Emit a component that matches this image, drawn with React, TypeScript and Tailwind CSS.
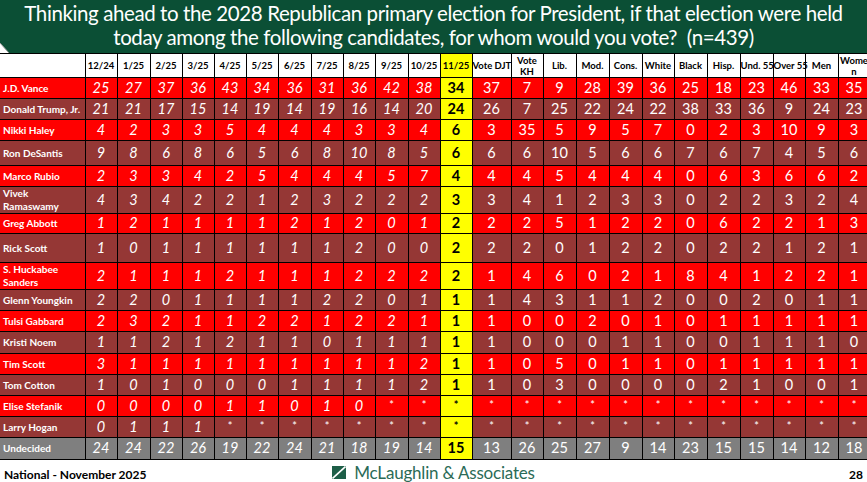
const dateCols = ["12/24", "1/25", "2/25", "3/25", "4/25", "5/25", "6/25", "7/25", "8/25", "9/25", "10/25"];
const dateW = ["w-[32px]", "w-[33px]", "w-[32px]", "w-[32px]", "w-[32px]", "w-[32px]", "w-[33px]", "w-[32px]", "w-[32px]", "w-[33px]", "w-[32px]"];
const demoCols = [["Vote DJT"], ["Vote", "KH"], ["Lib."], ["Mod."], ["Cons."], ["White"], ["Black"], ["Hisp."], ["Und. 55"], ["Over 55"], ["Men"], ["Wome", "n"]];
const demoW = ["w-[39px]", "w-[32px]", "w-[33px]", "w-[33px]", "w-[33px]", "w-[32px]", "w-[33px]", "w-[33px]", "w-[33px]", "w-[32px]", "w-[33px]", "w-[32px]"];

type Row = {
  name: string[];
  dates: string;
  cur: string;
  demo: string;
  bg: string;
  h: string;
};

const S = "* * * * * * * * * * * *";

const rows: Row[] = [
  { name: ["J.D. Vance"], dates: "25 27 37 36 43 34 36 31 36 42 38", cur: "34", demo: "37 7 9 28 39 36 25 18 23 46 33 35", bg: "bg-[#ff0000]", h: "h-[21px]" },
  { name: ["Donald Trump, Jr."], dates: "21 21 17 15 14 19 14 19 16 14 20", cur: "24", demo: "26 7 25 22 24 22 38 33 36 9 24 23", bg: "bg-[#953735]", h: "h-[21px]" },
  { name: ["Nikki Haley"], dates: "4 2 3 3 5 4 4 4 3 3 4", cur: "6", demo: "3 35 5 9 5 7 0 2 3 10 9 3", bg: "bg-[#ff0000]", h: "h-[21px]" },
  { name: ["Ron DeSantis"], dates: "9 8 6 8 6 5 6 8 10 8 5", cur: "6", demo: "6 6 10 5 6 6 7 6 7 4 5 6", bg: "bg-[#953735]", h: "h-[25px]" },
  { name: ["Marco Rubio"], dates: "2 3 3 4 2 5 4 4 4 5 7", cur: "4", demo: "4 4 5 4 4 4 0 6 3 6 6 2", bg: "bg-[#ff0000]", h: "h-[21px]" },
  { name: ["Vivek", "Ramaswamy"], dates: "4 3 4 2 2 1 2 3 2 2 2", cur: "3", demo: "3 4 1 2 3 3 0 2 2 3 2 4", bg: "bg-[#953735]", h: "h-[27px]" },
  { name: ["Greg Abbott"], dates: "1 2 1 1 1 1 2 1 2 0 1", cur: "2", demo: "2 2 5 1 2 2 0 6 2 2 1 3", bg: "bg-[#ff0000]", h: "h-[20px]" },
  { name: ["Rick Scott"], dates: "1 0 1 1 1 1 1 1 2 0 0", cur: "2", demo: "2 2 0 1 2 2 0 2 2 1 2 1", bg: "bg-[#953735]", h: "h-[29px]" },
  { name: ["S. Huckabee", "Sanders"], dates: "2 1 1 1 2 1 1 1 2 2 2", cur: "2", demo: "1 4 6 0 2 1 8 4 1 2 2 1", bg: "bg-[#ff0000]", h: "h-[25px]" },
  { name: ["Glenn Youngkin"], dates: "2 2 0 1 1 1 1 2 2 0 1", cur: "1", demo: "1 4 3 1 1 2 0 0 2 0 1 1", bg: "bg-[#953735]", h: "h-[21px]" },
  { name: ["Tulsi Gabbard"], dates: "2 3 2 1 1 2 2 1 2 2 1", cur: "1", demo: "1 0 0 2 0 1 0 1 1 1 1 1", bg: "bg-[#ff0000]", h: "h-[21px]" },
  { name: ["Kristi Noem"], dates: "1 1 2 1 2 1 1 0 1 1 1", cur: "1", demo: "1 0 0 0 1 1 0 0 1 1 1 0", bg: "bg-[#953735]", h: "h-[22px]" },
  { name: ["Tim Scott"], dates: "3 1 1 1 1 1 1 1 1 1 2", cur: "1", demo: "1 0 5 0 1 1 0 1 1 1 1 1", bg: "bg-[#ff0000]", h: "h-[21px]" },
  { name: ["Tom Cotton"], dates: "1 0 1 0 0 0 1 1 1 1 2", cur: "1", demo: "1 0 3 0 0 0 0 2 1 0 0 1", bg: "bg-[#953735]", h: "h-[21px]" },
  { name: ["Elise Stefanik"], dates: "0 0 0 0 1 1 0 1 0 * *", cur: "*", demo: S, bg: "bg-[#ff0000]", h: "h-[21px]" },
  { name: ["Larry Hogan"], dates: "0 1 1 1 * * * * * * *", cur: "*", demo: S, bg: "bg-[#953735]", h: "h-[21px]" },
  { name: ["Undecided"], dates: "24 24 22 26 19 22 24 21 18 19 14", cur: "15", demo: "13 26 25 27 9 14 23 15 15 14 12 18", bg: "bg-[#7f7f7f]", h: "h-[22px]" },
];

const cell = "border border-black p-0 text-center align-middle";

const Val = ({ v, italic }: { v: string; italic?: boolean }) =>
  v === "*" ? (
    <span className="relative -top-[2px] text-[11px] not-italic">*</span>
  ) : (
    <span className={italic ? "italic" : ""}>{v}</span>
  );

export default function App() {
  return (
    <div className="relative h-[482px] w-[867px] overflow-hidden bg-white font-['Lato','Liberation_Sans',sans-serif]">
      <div className="h-[53px] bg-[#0b4f35] pt-[1px] text-center text-[20.5px] leading-[24px] tracking-[-0.4px] text-white">
        <div>Thinking ahead to the 2028 Republican primary election for President, if that election were held</div>
        <div>today among the following candidates, for whom would you vote?&nbsp; (n=439)</div>
      </div>
      <svg className="absolute left-0 top-[43px]" width="10" height="10" viewBox="0 0 10 10">
        <polygon points="0,0 9,10 0,10" fill="#ffffff" />
        <line x1="0" y1="0" x2="9" y2="10" stroke="#9a9a9a" strokeWidth="1" />
      </svg>

      <table className="w-[870px] table-fixed border-collapse">
        <colgroup>
          <col className="w-[85px]" />
          {dateW.map((w, i) => (
            <col key={i} className={w} />
          ))}
          <col className="w-[32px]" />
          {demoW.map((w, i) => (
            <col key={i} className={w} />
          ))}
        </colgroup>
        <thead>
          <tr className="h-[24px] text-[9.5px] font-bold leading-[11px] text-black">
            <th className="border border-black border-l-0 bg-white"></th>
            {dateCols.map((d) => (
              <th key={d} className={`${cell} bg-white`}>
                {d}
              </th>
            ))}
            <th className={`${cell} bg-[#ffff00]`}>11/25</th>
            {demoCols.map((d, i) => (
              <th key={i} className={`${cell} whitespace-nowrap bg-white`}>
                {d.map((l, j) => (
                  <div key={j}>{l}</div>
                ))}
              </th>
            ))}
          </tr>
        </thead>
        <tbody>
          {rows.map((r) => (
            <tr key={r.name.join(" ")} className={`${r.h} ${r.bg} text-[14.5px] leading-none text-white`}>
              <td className="border border-black border-l-0 py-0 pl-[3px] pr-0 text-left align-middle text-[10px] font-bold leading-[13px]">
                {r.name.map((l, j) => (
                  <div key={j} className="whitespace-nowrap">
                    {l}
                  </div>
                ))}
              </td>
              {r.dates.split(" ").map((v, i) => (
                <td key={i} className={cell}>
                  <Val v={v} italic />
                </td>
              ))}
              <td className={`${cell} bg-[#ffff00] font-bold text-black`}>
                <Val v={r.cur} />
              </td>
              {r.demo.split(" ").map((v, i) => (
                <td key={i} className={cell}>
                  <Val v={v} />
                </td>
              ))}
            </tr>
          ))}
        </tbody>
      </table>

      <div className="grid h-[25px] grid-cols-[1fr_auto_1fr] items-center px-[4px]">
        <div className="pt-[4px] text-[12px] font-bold text-black">National - November 2025</div>
        <div className="flex items-center gap-[8px]">
          <svg width="14" height="13" viewBox="0 0 14 13">
            <rect width="14" height="13" fill="#1d5e47" />
            <line x1="0.5" y1="12.5" x2="13.5" y2="0.5" stroke="#ffffff" strokeWidth="1.6" />
          </svg>
          <span className="text-[17px] leading-none tracking-[-0.2px] text-[#2b6b57]">McLaughlin &amp; Associates</span>
        </div>
        <div className="pt-[5px] text-right text-[12px] font-bold text-black">28</div>
      </div>
    </div>
  );
}
